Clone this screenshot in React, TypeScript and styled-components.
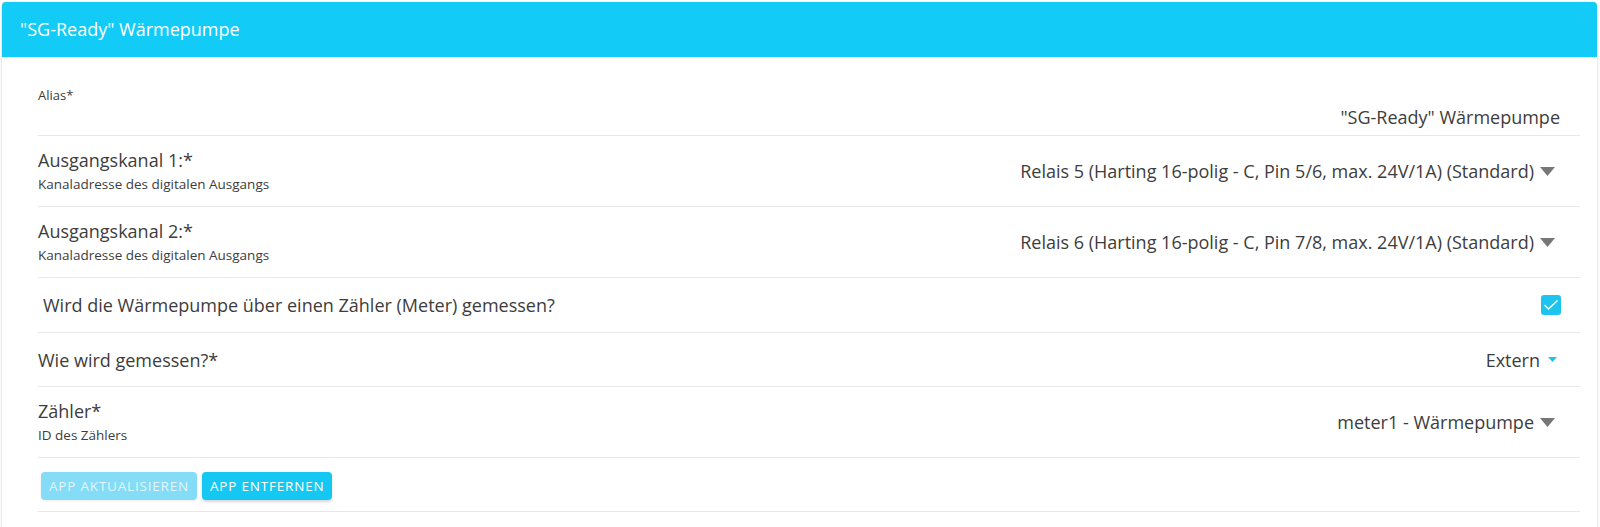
import React from "react";
import styled, { createGlobalStyle } from "styled-components";

const Global = createGlobalStyle`
  html, body { margin: 0; padding: 0; background: #ffffff; }
  body { font-family: "Open Sans", "Noto Sans", sans-serif; color: #3d3d3d; }
  * { box-sizing: border-box; }
`;

const Card = styled.section`
  margin: 2px 3px 0 2px;
  border-radius: 4px;
  background: #fff;
  box-shadow: 0 1px 3px rgba(0, 0, 0, 0.18), 0 0 1px rgba(0, 0, 0, 0.12);
  overflow: hidden;
`;

const Header = styled.header`
  height: 55px;
  background: #12cbf7;
  color: #fff;
  display: flex;
  align-items: center;
  padding-left: 18px;
  font-size: 18px;
  padding-bottom: 2px;
`;

const Body = styled.div`
  padding: 0 17px 20px 36px;
`;

const Row = styled.div<{ $h: number; $pl?: number }>`
  min-height: ${(p) => p.$h}px;
  border-bottom: 1px solid #e8e8e8;
  display: flex;
  align-items: center;
  justify-content: space-between;
  padding-left: ${(p) => p.$pl ?? 0}px;
`;

const StackedRow = styled.div`
  border-bottom: 1px solid #e8e8e8;
  padding: 29px 20px 6px 0;
  display: flex;
  flex-direction: column;
`;

const SmallLabel = styled.div`
  font-size: 13px;
  line-height: 18px;
`;

const InputValue = styled.div`
  margin-top: 1px;
  font-size: 18px;
  line-height: 24px;
  text-align: right;
`;

const LabelBlock = styled.div`
  display: flex;
  flex-direction: column;
  gap: 4px;
`;

const Title = styled.div`
  font-size: 18px;
  line-height: 22px;
`;

const Sub = styled.div`
  font-size: 13.5px;
  line-height: 19px;
`;

const Select = styled.div<{ $pr: number; $gap: number }>`
  display: flex;
  align-items: center;
  gap: ${(p) => p.$gap}px;
  font-size: 18px;
  line-height: 24px;
  padding-right: ${(p) => p.$pr}px;
`;

const Check = styled.div`
  width: 20px;
  height: 20px;
  border-radius: 3px;
  background: #1dc4ee;
  margin-right: 19px;
  display: flex;
  align-items: center;
  justify-content: center;
`;

const ButtonRow = styled.div`
  display: flex;
  gap: 5px;
  padding: 14px 0 11px 3px;
  border-bottom: 1px solid #e8e8e8;
`;

const Button = styled.button<{ $disabled?: boolean }>`
  height: 28px;
  padding: 0 8px;
  border: none;
  border-radius: 4px;
  font-family: "Open Sans", "Noto Sans", sans-serif;
  font-size: 13.5px;
  letter-spacing: 0.8px;
  text-transform: uppercase;
  color: ${(p) => (p.$disabled ? "rgba(255,255,255,0.78)" : "#fff")};
  background: ${(p) => (p.$disabled ? "#84dcf6" : "#15c8f3")};
  box-shadow: ${(p) =>
    p.$disabled ? "0 1px 3px rgba(0,0,0,0.08)" : "0 2px 3px rgba(0,0,0,0.16)"};
`;

const Caret = ({ color = "#777", w = 15, h = 9 }: { color?: string; w?: number; h?: number }) => (
  <svg width={w} height={h} viewBox={`0 0 ${w} ${h}`}>
    <polygon points={`0,0 ${w},0 ${w / 2},${h}`} fill={color} />
  </svg>
);

export default function App() {
  return (
    <>
      <Global />
      <Card>
        <Header>"SG-Ready" Wärmepumpe</Header>
        <Body>
          <StackedRow>
            <SmallLabel>Alias*</SmallLabel>
            <InputValue>"SG-Ready" Wärmepumpe</InputValue>
          </StackedRow>
          <Row $h={71}>
            <LabelBlock>
              <Title>Ausgangskanal 1:*</Title>
              <Sub>Kanaladresse des digitalen Ausgangs</Sub>
            </LabelBlock>
            <Select $pr={25} $gap={6}>
              Relais 5 (Harting 16-polig - C, Pin 5/6, max. 24V/1A) (Standard)
              <Caret />
            </Select>
          </Row>
          <Row $h={71}>
            <LabelBlock>
              <Title>Ausgangskanal 2:*</Title>
              <Sub>Kanaladresse des digitalen Ausgangs</Sub>
            </LabelBlock>
            <Select $pr={25} $gap={6}>
              Relais 6 (Harting 16-polig - C, Pin 7/8, max. 24V/1A) (Standard)
              <Caret />
            </Select>
          </Row>
          <Row $h={55} $pl={5}>
            <Title>Wird die Wärmepumpe über einen Zähler (Meter) gemessen?</Title>
            <Check>
              <svg width="16" height="12" viewBox="0 0 16 12">
                <polyline points="1.5,6 5.5,10 14.5,1.5" fill="none" stroke="#fff" strokeWidth="1.5" />
              </svg>
            </Check>
          </Row>
          <Row $h={54}>
            <Title>Wie wird gemessen?*</Title>
            <Select $pr={23} $gap={8}>
              Extern
              <Caret color="#1dc4ee" w={9} h={5} />
            </Select>
          </Row>
          <Row $h={71}>
            <LabelBlock>
              <Title>Zähler*</Title>
              <Sub>ID des Zählers</Sub>
            </LabelBlock>
            <Select $pr={25} $gap={6}>
              meter1 - Wärmepumpe
              <Caret />
            </Select>
          </Row>
          <ButtonRow>
            <Button $disabled>App aktualisieren</Button>
            <Button>App entfernen</Button>
          </ButtonRow>
        </Body>
      </Card>
    </>
  );
}
